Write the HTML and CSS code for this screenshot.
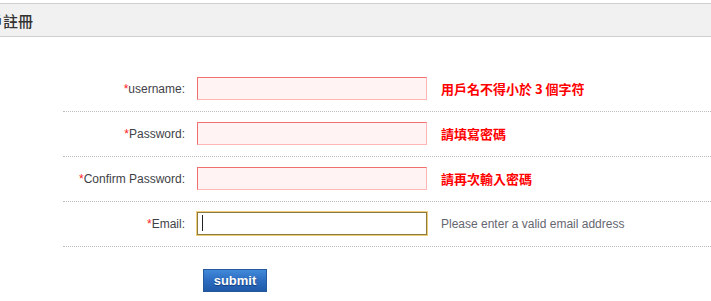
FILE: index.html
```html
<!DOCTYPE html>
<html lang="zh-Hant">
<head>
<meta charset="utf-8">
<title>用戶註冊</title>
<link rel="stylesheet" href="styles.css">
</head>
<body>
<div class="page">
  <div class="header"><span class="header-title">用戶註冊</span></div>
  <form class="form">
    <div class="row">
      <label class="label"><span class="req">*</span>username:</label>
      <span class="field-wrap"><input class="field field-error" type="text"></span>
      <span class="msg msg-error">用戶名不得小於 3 個字符</span>
    </div>
    <div class="row">
      <label class="label"><span class="req">*</span>Password:</label>
      <span class="field-wrap"><input class="field field-error" type="password"></span>
      <span class="msg msg-error">請填寫密碼</span>
    </div>
    <div class="row">
      <label class="label"><span class="req">*</span>Confirm Password:</label>
      <span class="field-wrap"><input class="field field-error" type="password"></span>
      <span class="msg msg-error">請再次輸入密碼</span>
    </div>
    <div class="row">
      <label class="label"><span class="req">*</span>Email:</label>
      <span class="field-wrap field-wrap-focus"><input class="field field-focus" type="text"></span>
      <span class="msg msg-hint">Please enter a valid email address</span>
    </div>
    <div class="actions">
      <button class="submit" type="button">submit</button>
    </div>
  </form>
</div>
</body>
</html>
```

FILE: styles.css
```css
html, body {
  margin: 0;
  padding: 0;
  background: #ffffff;
}

body {
  font-family: "Liberation Sans", Arial, sans-serif;
  font-size: 12px;
  color: #444;
  overflow: hidden;
}

.page {
  padding-top: 3px;
}

.header {
  height: 32px;
  border-top: 1px solid #cfcfcf;
  border-bottom: 1px solid #cfcfcf;
  background: #f1f1f1;
  display: flex;
  align-items: center;
  overflow: hidden;
}

.header-title {
  margin-left: -27px;
  font-family: "Noto Sans CJK TC", "Noto Sans CJK SC", sans-serif;
  font-size: 15px;
  font-weight: 500;
  color: #333;
  white-space: nowrap;
  line-height: 1;
}

.form {
  margin: 30px 0 0 63px;
}

.row {
  display: flex;
  align-items: center;
  padding: 10px 0 11px;
  border-bottom: 1px dotted #bdbdbd;
}

.label {
  width: 122px;
  flex: none;
  text-align: right;
  font-size: 12px;
  color: #3f3f48;
  white-space: nowrap;
}

.req {
  color: #ff1a1a;
}

.field-wrap {
  position: relative;
  display: block;
  margin-left: 12px;
  width: 230px;
  height: 23px;
  flex: none;
}

.field {
  display: block;
  box-sizing: border-box;
  width: 230px;
  height: 23px;
  margin: 0;
  padding: 0 4px;
  font-family: "Liberation Sans", Arial, sans-serif;
  font-size: 12px;
  outline: none;
}

.field-error {
  background: #fff4f3;
  border: 1px solid;
  border-color: #f07070 #ffb6b6 #ffb6b6 #f07070;
}

.field-focus {
  background: #ffffff;
  border: 1px solid #8c7b3e;
  box-shadow: 0 0 0 1px #efcd7a;
}

.field-wrap-focus::after {
  content: "";
  position: absolute;
  left: 5px;
  top: 3px;
  width: 1px;
  height: 16px;
  background: #222;
}

.msg {
  margin-left: 14px;
  white-space: nowrap;
}

.msg-error {
  font-family: "Noto Sans CJK TC", "Noto Sans CJK SC", sans-serif;
  font-size: 13px;
  font-weight: 700;
  color: #ff0000;
  line-height: 1;
}

.msg-hint {
  font-size: 12px;
  color: #666670;
}

.actions {
  padding: 22px 0 0 140px;
}

.submit {
  display: block;
  box-sizing: border-box;
  width: 64px;
  height: 23px;
  margin: 0;
  padding: 0;
  border: 1px solid #24589b;
  background: linear-gradient(to bottom, #4289da 0%, #2c6cc0 50%, #1f5aa9 100%);
  color: #ffffff;
  font-family: "Liberation Sans", Arial, sans-serif;
  font-size: 13px;
  font-weight: 700;
  text-shadow: 0 1px 1px rgba(0, 30, 80, 0.6);
  cursor: pointer;
}
```
